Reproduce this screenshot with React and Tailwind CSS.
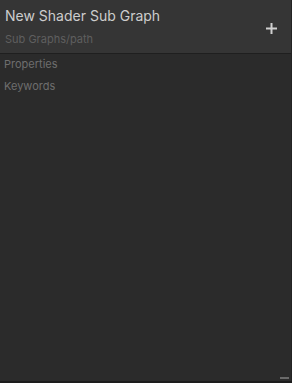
export default function App() {
  return (
    <div className="w-[292px] h-[383px] flex flex-col bg-[#2b2b2b] font-['Inter',sans-serif] overflow-hidden">
      <div className="flex-1 flex flex-col border-r border-[#232323]">
        <div className="h-[54px] bg-[#353535] border-b border-[#1f1f1f] flex items-start justify-between pl-[5px] pr-[14px]">
          <div className="flex flex-col">
            <div className="text-[14px] leading-[18px] text-[#cdcdcd] mt-[7px]">New Shader Sub Graph</div>
            <div className="text-[11px] leading-[14px] text-[#5f5f5f] mt-[7px]">Sub Graphs/path</div>
          </div>
          <div className="mt-[23px]">
            <svg width="11" height="11" viewBox="0 0 11 11">
              <rect x="4.5" y="0" width="2" height="11" fill="#cfcfcf" />
              <rect x="0" y="4.5" width="11" height="2" fill="#cfcfcf" />
            </svg>
          </div>
        </div>
        <div className="flex flex-col pl-[4px] text-[11px] leading-[14px] text-[#6e6e6e]">
          <div className="mt-[3px]">Properties</div>
          <div className="mt-[8px]">Keywords</div>
        </div>
        <div className="flex-1" />
        <div className="flex justify-end pr-[2px] pb-[2px]">
          <div className="w-[9px] h-[2px] bg-[#6a6a6a]" />
        </div>
      </div>
      <div className="h-[2px] bg-[#1c1c1c]" />
    </div>
  );
}
